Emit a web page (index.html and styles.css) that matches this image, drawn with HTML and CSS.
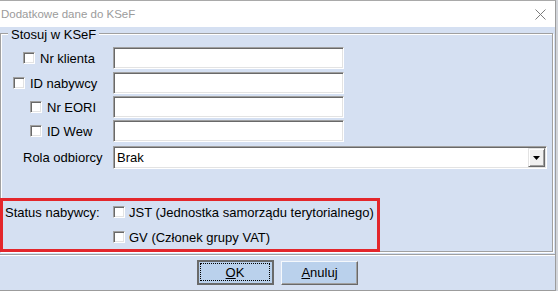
FILE: index.html
```html
<!DOCTYPE html>
<html lang="pl">
<head>
<meta charset="utf-8">
<title>Dodatkowe dane do KSeF</title>
<link rel="stylesheet" href="styles.css">
</head>
<body>
<div class="window">
  <div class="titlebar">
    <span class="title">Dodatkowe dane do KSeF</span>
    <svg class="close" width="11" height="11" viewBox="0 0 11 11"><path d="M0.5 0.5L10.5 10.5M10.5 0.5L0.5 10.5" stroke="#7c7c7c" stroke-width="1" fill="none"/></svg>
  </div>
  <div class="content">
    <div class="group">
      <span class="legend">Stosuj w KSeF</span>
      <div class="fields">
        <div class="row"><label class="lbl off-a"><span class="cb"></span>Nr klienta</label><span class="input"></span></div>
        <div class="row r2"><label class="lbl off-b"><span class="cb"></span>ID nabywcy</label><span class="input"></span></div>
        <div class="row"><label class="lbl off-c"><span class="cb"></span>Nr EORI</label><span class="input"></span></div>
        <div class="row"><label class="lbl off-c"><span class="cb"></span>ID Wew</label><span class="input"></span></div>
        <div class="row r5"><span class="lbl off-a">Rola odbiorcy</span>
          <div class="select"><span class="sel-text">Brak</span><span class="drop"><svg width="7" height="4" viewBox="0 0 7 4"><path d="M0 0H7L3.5 4Z" fill="#000"/></svg></span></div>
        </div>
      </div>
      <div class="status">
        <span class="status-lbl">Status nabywcy:</span>
        <div class="opts">
          <label class="opt"><span class="cb"></span>JST (Jednostka samorządu terytorialnego)</label>
          <label class="opt"><span class="cb"></span>GV (Członek grupy VAT)</label>
        </div>
      </div>
      <div class="highlight"></div>
    </div>
    <div class="buttons">
      <button class="btn default"><span class="focus"><u>O</u>K</span></button>
      <button class="btn"><u>A</u>nuluj</button>
    </div>
  </div>
</div>
</body>
</html>
```

FILE: styles.css
```css
* { box-sizing: border-box; }
html, body { margin: 0; padding: 0; }
body {
  background: #d2d5da;
  font-family: "Liberation Sans", Arial, sans-serif;
  font-size: 13px;
  color: #000;
  width: 558px;
  height: 291px;
  overflow: hidden;
}
.window {
  width: 556px;
  height: 291px;
  border-top: 1px solid #a9a9a9;
  border-right: 1px solid #9c9c9c;
  border-bottom: 1px solid #9c9c9c;
  display: flex;
  flex-direction: column;
  background: #d5e0f2;
}
.titlebar {
  height: 26px;
  flex: none;
  background: #fff;
  display: flex;
  align-items: center;
  justify-content: space-between;
  padding: 0 9px 0 1px;
}
.title { font-size: 11.5px; color: #9b9b9b; }
.close { display: block; }
.content { flex: 1; display: flex; flex-direction: column; }
.group {
  position: relative;
  flex: none;
  height: 219px;
  margin: 6px 2px 0 0;
  border: 1px solid #a0a0a0;
  box-shadow: 1px 1px 0 #fff, inset 1px 1px 0 #fff;
}
.legend {
  position: absolute;
  top: -7px;
  left: 7px;
  padding: 0 3px;
  line-height: 15px;
  background: #d5e0f2;
}
.fields {
  display: flex;
  flex-direction: column;
  gap: 2px;
  padding-top: 13px;
}
.row { display: flex; align-items: center; height: 22px; }
.r2 { margin-top: 1px; }
.r5 { margin-top: 2px; height: 23px; }
.lbl { width: 112px; display: flex; align-items: center; flex: none; }
.off-a { padding-left: 22px; }
.off-b { padding-left: 12px; }
.off-c { padding-left: 29px; }
.cb {
  width: 12px;
  height: 12px;
  flex: none;
  background: #fff;
  border: 1px solid;
  border-color: #a0a0a0 #fff #fff #a0a0a0;
  box-shadow: inset 1px 1px 0 #696969, inset -1px -1px 0 #e3e3e3;
  margin-right: 5px;
}
.input {
  width: 231px;
  height: 22px;
  background: #fff;
  border: 1px solid;
  border-color: #a0a0a0 #fff #fff #a0a0a0;
  box-shadow: inset 1px 1px 0 #696969, inset -1px -1px 0 #e3e3e3;
}
.select {
  width: 434px;
  height: 23px;
  background: #fff;
  border: 1px solid;
  border-color: #a0a0a0 #fff #fff #a0a0a0;
  box-shadow: inset 1px 1px 0 #696969, inset -1px -1px 0 #e3e3e3;
  padding: 1px;
  display: flex;
  align-items: stretch;
}
.sel-text { padding-left: 2px; display: flex; align-items: center; }
.drop {
  margin-left: auto;
  width: 17px;
  background: #f0f0f0;
  border: 1px solid;
  border-color: #e3e3e3 #696969 #696969 #e3e3e3;
  box-shadow: inset 1px 1px 0 #fff, inset -1px -1px 0 #a0a0a0;
  display: flex;
  align-items: center;
  justify-content: center;
}
.drop svg { display: block; }
.status { display: flex; margin-top: 31px; padding-left: 4px; }
.status-lbl { width: 108px; height: 24px; display: flex; align-items: center; flex: none; }
.opts { display: flex; flex-direction: column; gap: 1px; }
.opt { height: 24px; display: flex; align-items: center; }
.opt .cb { margin-right: 4px; }
.highlight {
  position: absolute;
  left: -1px;
  top: 164px;
  width: 380px;
  height: 54px;
  border: 3px solid #e3262b;
}
.buttons {
  flex: 1;
  margin-top: 2px;
  border-top: 1px solid #a0a0a0;
  box-shadow: inset 0 1px 0 #fff;
  display: flex;
  justify-content: center;
  align-items: center;
  gap: 7px;
}
.btn {
  width: 77px;
  height: 24px;
  padding: 0;
  margin: 0;
  font: inherit;
  color: #000;
  background: #bad1ec;
  border: 1px solid;
  border-color: #f4f8fc #696969 #696969 #f4f8fc;
  box-shadow: inset -1px -1px 0 #a0a0a0;
  display: flex;
  align-items: center;
  justify-content: center;
}
.btn.default {
  height: 25px;
  border: 2px solid #6a6a6a;
  box-shadow: none;
  padding: 1px 2px 2px 1px;
  align-items: stretch;
}
.focus {
  flex: 1;
  border: 1px dotted #000;
  display: flex;
  align-items: center;
  justify-content: center;
}
```
